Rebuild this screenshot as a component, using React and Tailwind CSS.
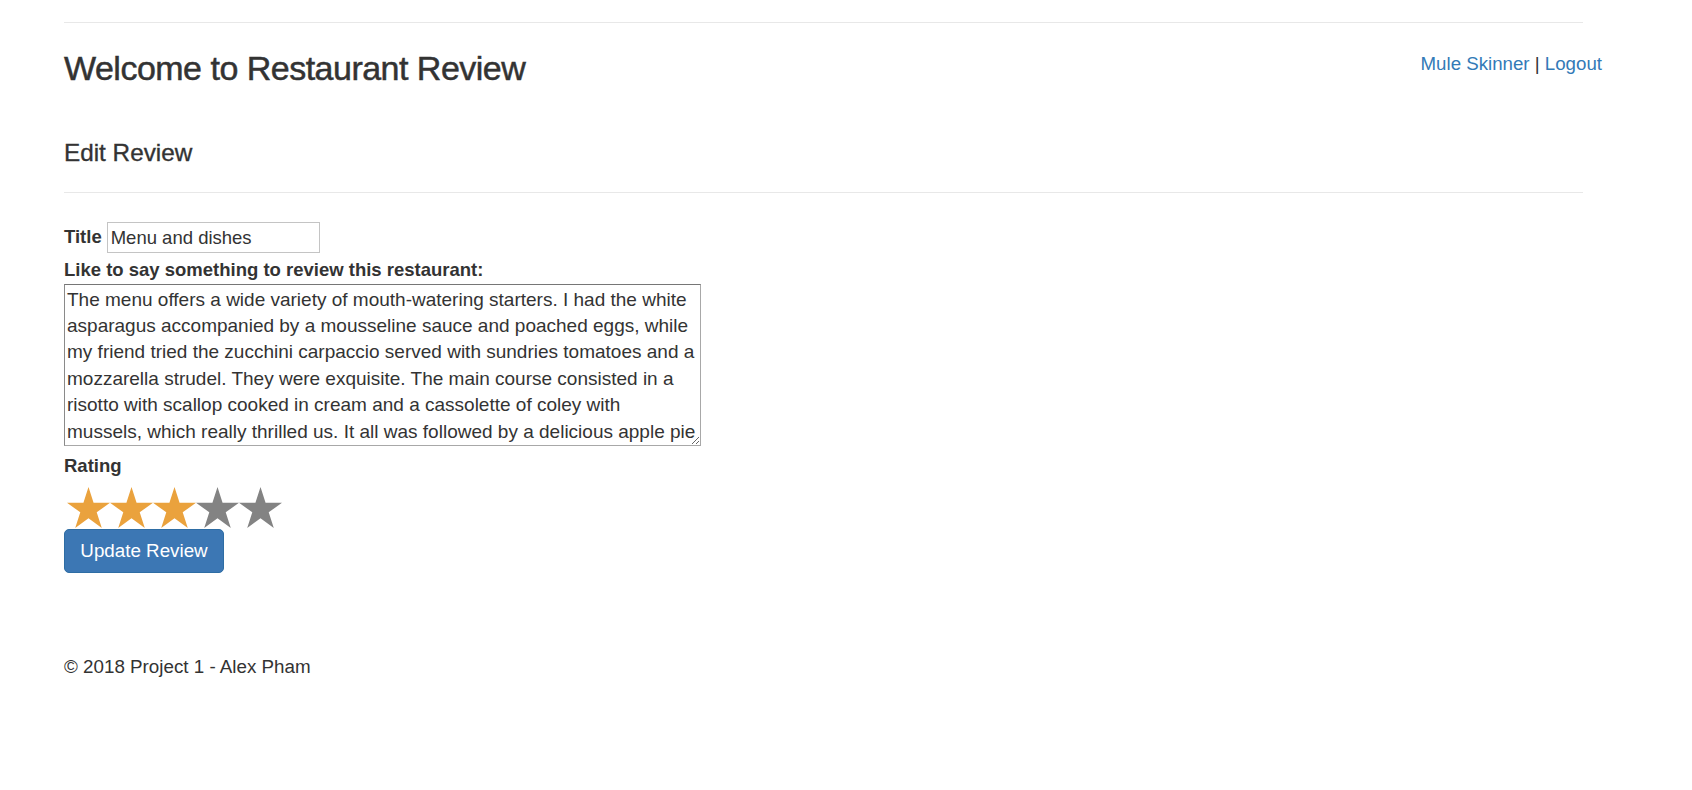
const REVIEW = 'The menu offers a wide variety of mouth-watering starters. I had the white asparagus accompanied by a mousseline sauce and poached eggs, while my friend tried the zucchini carpaccio served with sundries tomatoes and a mozzarella strudel. They were exquisite. The main course consisted in a risotto with scallop cooked in cream and a cassolette of coley with mussels, which really thrilled us. It all was followed by a delicious apple pie with vanilla ice cream and a cup of coffee.'

function Star({ on }) {
  return (
    <svg width="43" height="41" viewBox="0 0 100 95" className="block shrink-0">
      <polygon
        points="50,0 61.8,36.3 100,36.3 69.1,58.8 80.9,95.1 50,72.6 19.1,95.1 30.9,58.8 0,36.3 38.2,36.3"
        fill={on ? '#eaa23d' : '#838383'}
      />
    </svg>
  )
}

export default function App() {
  const rating = 3
  return (
    <div
      className="min-h-screen bg-white text-[#333] text-[18.5px] leading-[1.43]"
      style={{ fontFamily: '"Liberation Sans", Arial, sans-serif' }}
    >
      <div className="pl-[64px] pr-[109px]">
        <div className="mt-[22px] h-px bg-[#e8e8e8]" />
      </div>

      {/* Header */}
      <div className="flex items-start justify-between pl-[64px] pr-[90px] mt-[27px]">
        <h3 className="text-[34px] leading-[1.1] tracking-[-0.015em] font-medium [-webkit-text-stroke:0.5px_#333]">
          Welcome to Restaurant Review
        </h3>
        <div className="pt-px text-[18.7px]">
          <a href="#" className="text-[#337ab7]">Mule Skinner</a>
          <span> | </span>
          <a href="#" className="text-[#337ab7]">Logout</a>
        </div>
      </div>

      <div className="pl-[64px] pr-[109px]">
        {/* Page header */}
        <div className="mt-[53px] pb-[12px] border-b border-[#e8e8e8]">
          <h4 className="text-[24.3px] leading-[1.1] font-medium mb-[13px] [-webkit-text-stroke:0.35px_#333]">Edit Review</h4>
        </div>

        {/* Form */}
        <form className="mt-[29px]">
          <div className="flex items-center h-[31px]">
            <label className="font-bold">Title</label>
            <input
              type="text"
              defaultValue="Menu and dishes"
              className="ml-[5px] w-[213px] h-[31px] border border-[#c4c4c4] px-[3px] outline-none text-[18.5px]"
            />
          </div>

          <label className="block font-bold mt-[4px]">Like to say something to review this restaurant:</label>
          <textarea
            defaultValue={REVIEW}
            className="block w-[637px] h-[162px] border border-[#a8a8a8] border-t-[#767676] border-l-[#8a8a8a] px-[2px] py-[2px] overflow-hidden outline-none text-[19px] leading-[26.4px]"
          />

          <label className="block font-bold mt-[7px]">Rating</label>
          <div className="flex mt-[8px] pl-[3px]">
            {[1, 2, 3, 4, 5].map(n => <Star key={n} on={n <= rating} />)}
          </div>

          <button
            type="button"
            className="mt-px w-[160px] h-[44px] rounded-[5px] bg-[#3c77b4] border border-[#2e6da4] text-white text-[18.8px]"
          >
            Update Review
          </button>
        </form>

        <footer className="mt-[81px] text-[18.8px]">© 2018 Project 1 - Alex Pham</footer>
      </div>
    </div>
  )
}
